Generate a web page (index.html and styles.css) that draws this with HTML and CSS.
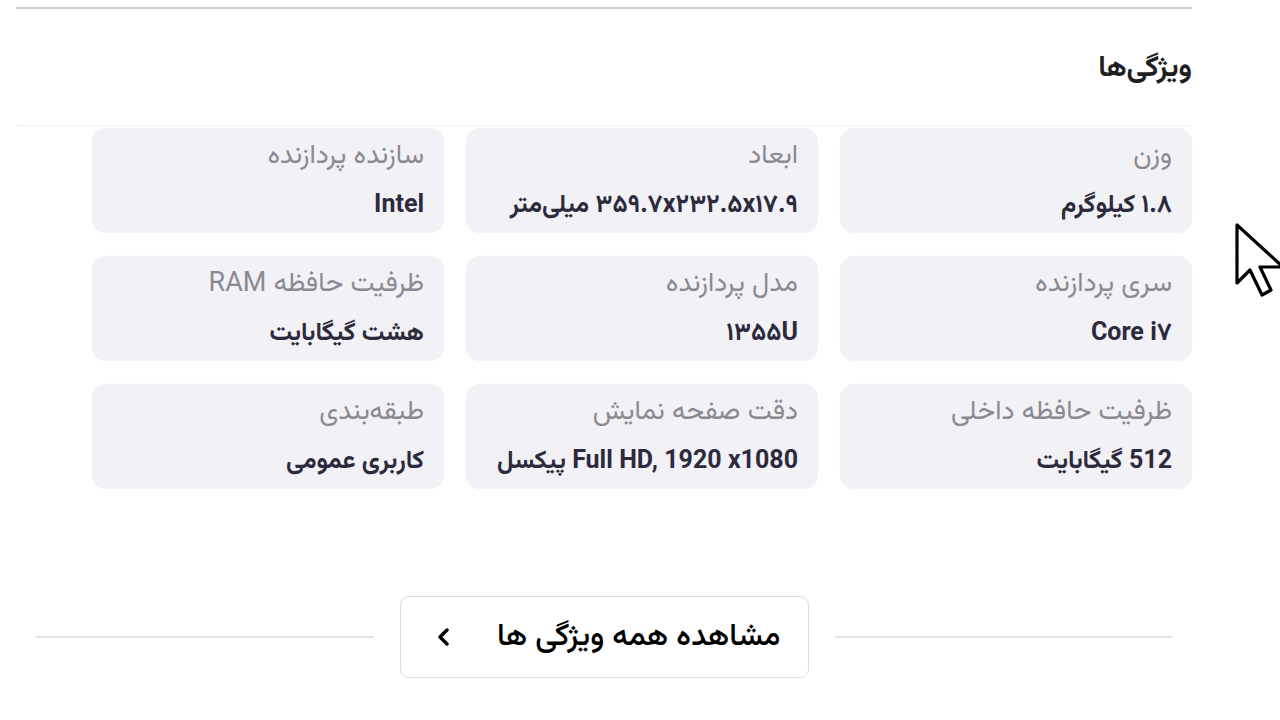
FILE: index.html
```html
<!DOCTYPE html>
<html lang="fa" dir="rtl">
<head>
<meta charset="utf-8">
<title>ویژگی‌ها</title>
<link rel="stylesheet" href="styles.css">
</head>
<body>
<div class="page">
  <div class="top-rule"></div>
  <h2 class="title">ویژگی‌ها</h2>
  <div class="dots"></div>
  <div class="grid">
    <div class="card"><div class="label">وزن</div><div class="value">۱.۸ کیلوگرم</div></div>
    <div class="card"><div class="label">ابعاد</div><div class="value">۳۵۹.۷x۲۳۲.۵x۱۷.۹ میلی‌متر</div></div>
    <div class="card"><div class="label">سازنده پردازنده</div><div class="value">Intel</div></div>
    <div class="card"><div class="label">سری پردازنده</div><div class="value" dir="ltr">Core i۷</div></div>
    <div class="card"><div class="label">مدل پردازنده</div><div class="value" dir="ltr">۱۳۵۵U</div></div>
    <div class="card"><div class="label">ظرفیت حافظه RAM</div><div class="value">هشت گیگابایت</div></div>
    <div class="card"><div class="label">ظرفیت حافظه داخلی</div><div class="value">512 گیگابایت</div></div>
    <div class="card"><div class="label">دقت صفحه نمایش</div><div class="value">Full HD, 1920 x1080 پیکسل</div></div>
    <div class="card"><div class="label">طبقه‌بندی</div><div class="value">کاربری عمومی</div></div>
  </div>
  <div class="more-row">
    <div class="line"></div>
    <button class="more-btn">
      <span>مشاهده همه ویژگی ها</span>
      <svg class="chev" width="14" height="18" viewBox="0 0 14 18"><path d="M10 2 L3 9 L10 16" fill="none" stroke="#000" stroke-width="3.4" stroke-linecap="round" stroke-linejoin="round"/></svg>
    </button>
    <div class="line"></div>
  </div>
</div>
<svg class="cursor" width="52" height="80" viewBox="0 0 52 80"><path d="M2 2 L2 60 L15 47 L27 72 L36 67 L25 44 L48 44 Z" fill="#fff" stroke="#000" stroke-width="3.2" stroke-linejoin="round"/></svg>
</body>
</html>
```
FILE: styles.css
```css
html, body {
  margin: 0;
  padding: 0;
  background: #ffffff;
}
body {
  font-family: "Vazirmatn", "Noto Sans Arabic", "DejaVu Sans", sans-serif;
  overflow: hidden;
  width: 1280px;
  height: 720px;
  position: relative;
}
.page {
  width: 1176px;
  margin-left: 16px;
  margin-right: 88px;
}
.top-rule {
  margin-top: 7px;
  height: 2px;
  background: #cbcbcb;
}
.title {
  margin: 0;
  padding-top: 42px;
  height: 74px;
  box-sizing: border-box;
  font-size: 29px;
  font-weight: 700;
  line-height: 36px;
  color: #1f1f1f;
  text-align: right;
}
.dots {
  margin-top: 42px;
  border-top: 1px dotted #e2e2e6;
}
.grid {
  width: 1100px;
  margin-top: 2px;
  margin-right: 0;
  display: grid;
  grid-template-columns: repeat(3, 352px);
  grid-auto-rows: 105px;
  column-gap: 22px;
  row-gap: 23px;
}
.card {
  background: #f2f1f5;
  border-radius: 14px;
  padding: 13px 20px 0;
  box-sizing: border-box;
  box-shadow: 0 0 2px rgba(0,0,0,0.03);
}
.label {
  font-size: 27px;
  line-height: 32px;
  color: #8b8a90;
  text-align: right;
  white-space: nowrap;
}
.value {
  margin-top: 17px;
  font-size: 25px;
  line-height: 32px;
  font-weight: 700;
  color: #2c2a3d;
  text-align: right;
  white-space: nowrap;
}
.value[dir="ltr"] {
  direction: ltr;
  display: flex;
  justify-content: flex-end;
}
.more-row {
  margin-top: 107px;
  width: 1136px;
  margin-right: 20px;
  display: flex;
  align-items: center;
  gap: 26px;
}
.line {
  flex: 1;
  height: 2px;
  background: #e4e4e4;
}
.more-btn {
  width: 409px;
  height: 82px;
  box-sizing: border-box;
  border: 1.5px solid #dcdcdc;
  border-radius: 9px;
  background: #fff;
  display: flex;
  align-items: center;
  justify-content: space-between;
  padding: 0 27px 0 36px;
  font-family: inherit;
  font-size: 31px;
  font-weight: 500;
  color: #000;
  direction: rtl;
}
.chev {
  display: block;
}
.cursor {
  position: absolute;
  left: 1235px;
  top: 223px;
}
```
